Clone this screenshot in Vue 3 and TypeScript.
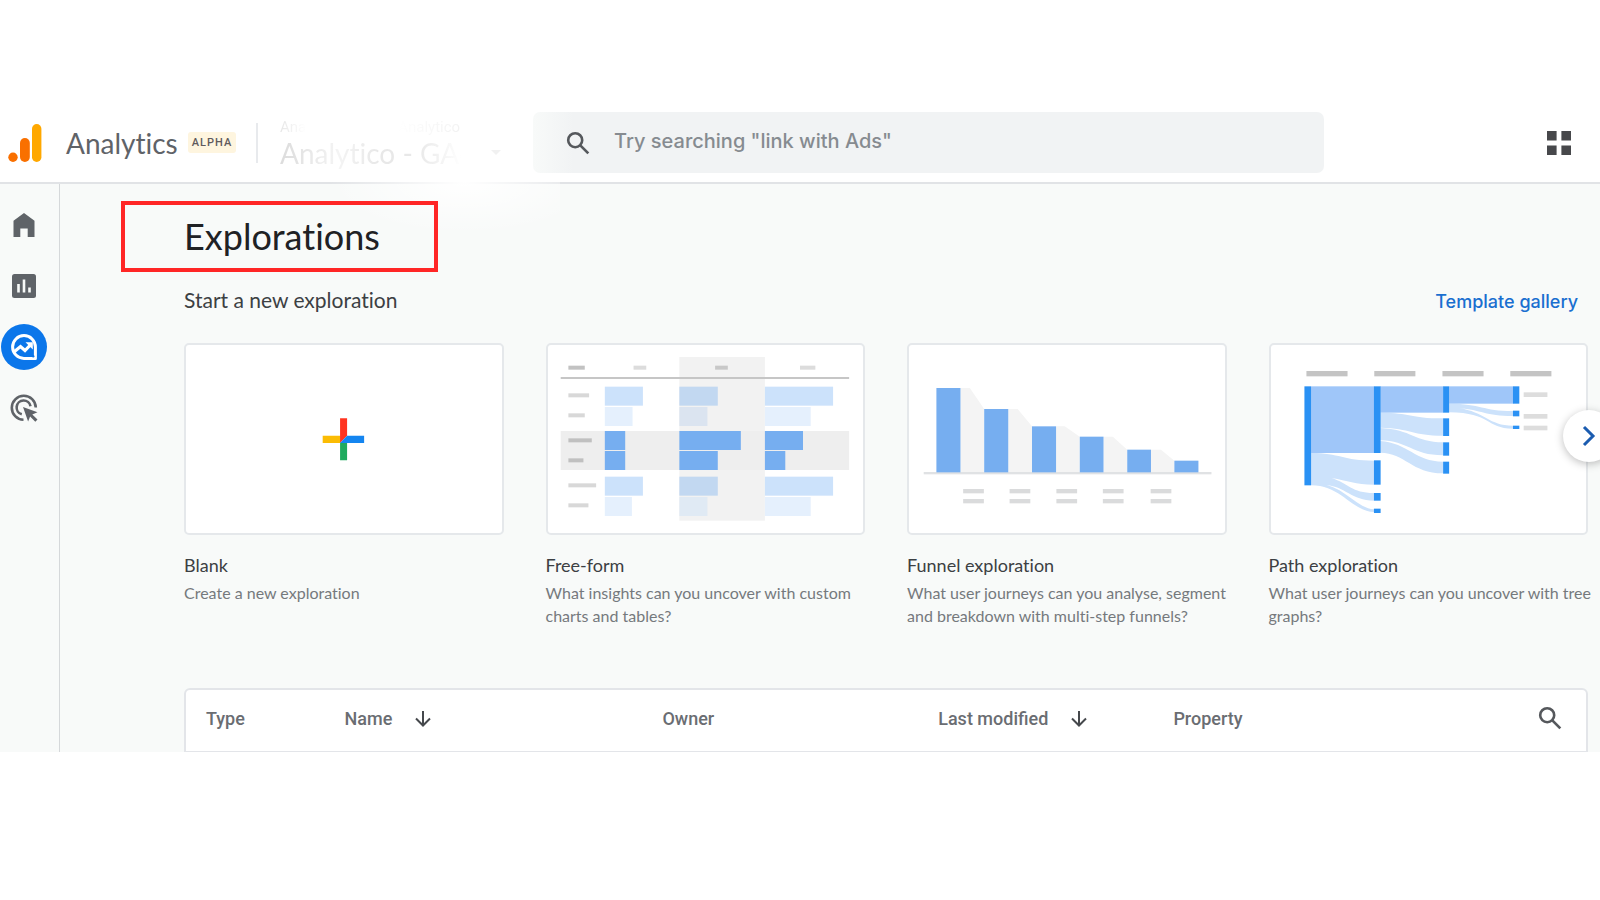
<script setup lang="ts">
interface Template {
  id: string
  title: string
  text: string
  box: string
}
interface Bar {
  x: number
  y: number
  w: number
  h: number
  c: string
}

const templates: Template[] = [
  { id: 'blank', title: 'Blank', text: 'Create a new exploration', box: '20 45 944 564' },
  { id: 'free', title: 'Free-form', text: 'What insights can you uncover with custom charts and tables?', box: '40 31 944 564' },
  { id: 'funnel', title: 'Funnel exploration', text: 'What user journeys can you analyse, segment and breakdown with multi-step funnels?', box: '44 31 944 564' },
  { id: 'path', title: 'Path exploration', text: 'What user journeys can you uncover with tree graphs?', box: '49 31 944 564' },
]

const bar = (x: number, y: number, w: number, h: number, c: string): Bar => ({ x, y, w, h, c })

const freeBars: Bar[] = [
  bar(433, 67, 256, 491, '#f2f2f2'),
  bar(78, 289, 863, 117, '#eeeeee'),
  bar(101, 93, 49, 12, '#c2c2c2'),
  bar(296, 93, 38, 12, '#dcdcdc'),
  bar(540, 93, 38, 12, '#c8c8c8'),
  bar(794, 93, 46, 12, '#dcdcdc'),
  bar(78, 127, 863, 6, '#c6c6c6'),
  bar(101, 176, 62, 12, '#d8d8d8'),
  bar(101, 236, 49, 12, '#d8d8d8'),
  bar(101, 311, 70, 12, '#c0c0c0'),
  bar(101, 371, 45, 12, '#c0c0c0'),
  bar(101, 446, 83, 12, '#d8d8d8'),
  bar(101, 506, 60, 12, '#d8d8d8'),
  bar(210, 156, 114, 57, '#cce2fb'),
  bar(210, 217, 83, 57, '#e5f0fd'),
  bar(433, 156, 115, 57, '#c2d8f1'),
  bar(433, 217, 84, 57, '#dbe4f0'),
  bar(689, 156, 204, 57, '#cce2fb'),
  bar(689, 217, 137, 57, '#e5f0fd'),
  bar(210, 289, 61, 57, '#76aef0'),
  bar(210, 349, 61, 57, '#76aef0'),
  bar(433, 289, 184, 57, '#76aef0'),
  bar(433, 349, 115, 57, '#76aef0'),
  bar(689, 289, 114, 57, '#76aef0'),
  bar(689, 349, 61, 57, '#76aef0'),
  bar(210, 426, 114, 57, '#cce2fb'),
  bar(210, 487, 81, 57, '#e5f0fd'),
  bar(433, 426, 115, 57, '#c2d8f1'),
  bar(433, 487, 84, 57, '#e0eaf4'),
  bar(689, 426, 204, 57, '#cce2fb'),
  bar(689, 487, 137, 57, '#e5f0fd'),
]

const funnelBars: Bar[] = [
  bar(88, 412, 861, 7, '#e0e2e4'),
  bar(126, 160, 72, 253, '#76aef0'),
  bar(269, 223, 72, 190, '#76aef0'),
  bar(412, 275, 72, 138, '#76aef0'),
  bar(555, 306, 71, 107, '#76aef0'),
  bar(697, 345, 71, 68, '#76aef0'),
  bar(838, 378, 72, 35, '#76aef0'),
  ...[206, 345, 485, 624, 767].flatMap((x) => [bar(x, 463, 62, 13, '#dadbdc'), bar(x, 493, 62, 13, '#dadbdc')]),
]

const pathBars: Bar[] = [
  ...[155, 358, 562, 765].map((x) => bar(x, 109, 123, 16, '#c4c4c4')),
  bar(169, 155, 189, 200, '#9fc6f9'),
  bar(376, 155, 189, 79, '#9fc6f9'),
  bar(582, 155, 192, 52, '#9fc6f9'),
  bar(149, 155, 20, 297, '#2a91f4'),
  bar(357, 155, 20, 200, '#2a91f4'),
  bar(357, 377, 20, 73, '#2a91f4'),
  bar(357, 475, 20, 23, '#2a91f4'),
  bar(357, 522, 20, 13, '#2a91f4'),
  bar(564, 155, 18, 79, '#2a91f4'),
  bar(564, 251, 18, 53, '#2a91f4'),
  bar(564, 323, 18, 40, '#2a91f4'),
  bar(564, 381, 18, 36, '#2a91f4'),
  bar(773, 155, 19, 52, '#2a91f4'),
  bar(773, 228, 19, 17, '#2a91f4'),
  bar(773, 273, 19, 10, '#2a91f4'),
  bar(805, 173, 71, 14, '#dddddd'),
  bar(805, 238, 71, 14, '#dddddd'),
  bar(805, 273, 71, 14, '#dddddd'),
]

const barsFor: Record<string, Bar[]> = { free: freeBars, funnel: funnelBars, path: pathBars, blank: [] }
</script>

<template>
  <div class="page">
    <header class="top">
      <a class="brand" href="#">
        <svg class="logo" viewBox="0 0 34 40" aria-hidden="true">
          <rect x="24" y="1" width="9.4" height="38" rx="4.7" fill="#ffa800" />
          <rect x="12" y="15" width="9.8" height="24" rx="4.9" fill="#f97000" />
          <circle cx="5" cy="34.2" r="4.7" fill="#f97000" />
        </svg>
        <span class="name">Analytics</span>
        <span class="badge">ALPHA</span>
      </a>
      <button class="account" type="button">
        <span class="crumbs"><span class="faint">Ana</span><span class="fainter">Analytico</span></span>
        <span class="property"><span class="prop-name">Analytico - GA4</span>
          <svg class="caret" viewBox="0 0 10 5" aria-hidden="true"><path d="M0 0h10L5 5z" fill="#f1f1f1" /></svg>
        </span>
      </button>
      <label class="search">
        <svg viewBox="0 0 24 24" aria-hidden="true"><circle cx="9.2" cy="9.2" r="7" /><path d="M14.3 14.3l8 8" /></svg>
        <input type="search" aria-label="Search" placeholder="Try searching &quot;link with Ads&quot;" />
      </label>
      <button class="apps" type="button" aria-label="Apps">
        <svg viewBox="0 0 24 24"><path d="M0 0h9.6v9.6H0zM14.4 0H24v9.6h-9.6zM0 14.4h9.6V24H0zM14.4 14.4H24V24h-9.6z" fill="#47484b" /></svg>
      </button>
    </header>

    <div class="body">
      <nav class="side">
        <a href="#" aria-label="Home">
          <svg viewBox="0 0 28 28"><path d="M3.500 26V9.800L14 2l10.500 7.800V26h-6.800v-8.500h-7.400V26z" fill="#5f6368" /></svg>
        </a>
        <a href="#" aria-label="Reports">
          <svg viewBox="0 0 28 28"><rect x="2" y="2" width="24" height="24" rx="2.500" fill="#5f6368" /><path d="M8.500 12v8.500M14 7.500v13M19.500 15.500v5" stroke="#f8faf9" stroke-width="2.600" /></svg>
        </a>
        <a class="active" href="#" aria-label="Explore" aria-current="page">
          <svg viewBox="0 0 28 28" fill="none" stroke="#fff">
            <path d="M14 2.600a11.400 11.400 0 1 0 0 22.800h11.400V14A11.400 11.400 0 0 0 14 2.600z" stroke-width="3" stroke-linejoin="round" />
            <path d="M4.500 18.500l6-5 4.500 4 5.800-6" stroke-width="3.200" />
            <path d="M15.500 9.200h7.300v7.300z" fill="#fff" stroke="none" />
            <circle cx="23.200" cy="23.200" r="1.200" fill="#0b76ea" stroke="none" />
          </svg>
        </a>
        <a href="#" aria-label="Advertising">
          <svg viewBox="0 0 28 28" fill="none" stroke="#5f6368" stroke-width="2.600">
            <path d="M25.800 13.500A12 12 0 1 0 13.500 25.800" />
            <path d="M20.500 12.200A7 7 0 1 0 11.800 20.300" />
            <path d="M13 13l14.500 5.200-5.200 2.200 5.200 5.200-2.200 2.200-5.200-5.200-2 5z" fill="#5f6368" stroke="none" />
          </svg>
        </a>
      </nav>

      <main>
        <div class="haze" aria-hidden="true"></div>
        <h1>Explorations</h1>
        <div class="subhead">
          <h2>Start a new exploration</h2>
          <a href="#">Template gallery</a>
        </div>

        <section class="cards">
          <a v-for="t in templates" :key="t.id" class="card" href="#">
            <span class="frame">
              <svg :viewBox="t.box" preserveAspectRatio="none" aria-hidden="true">
                <g v-if="t.id === 'blank'">
                  <path d="M429 317h53v22h-53z" fill="#fbbc04" />
                  <path d="M481 338h21v53h-21z" fill="#1faa5e" />
                  <path d="M481 265h21v52l-21 22z" fill="#ff3420" />
                  <path d="M502 317h51v22h-72z" fill="#1485f0" />
                </g>
                <path v-if="t.id === 'funnel'" fill="#f4f4f4" d="M198 160h28l43 63v190h-71zM341 223h28l43 52v138h-71zM484 275h26l45 31v107h-71zM626 306h28l43 39v68h-71zM768 345h30l40 33v35h-70z" />
                <g v-if="t.id === 'path'" fill="#cce2fb">
                  <path d="M169 355C255 355 265 378 357 378V450C300 450 280 438 230 430C280 446 290 475 357 475V498C290 498 270 455 215 452C270 462 310 522 357 524V532C290 530 260 452 169 452z" />
                  <path d="M376 234C470 234 460 251 564 251V303C470 303 470 281 376 279z" />
                  <path d="M376 280C470 284 480 323 564 323V362C470 362 460 318 376 317z" />
                  <path d="M376 319C460 325 480 381 564 381V416C470 416 450 354 376 354z" />
                  <path d="M582 207C680 207 680 229 773 229V244C690 244 680 226 610 220C690 232 700 273 773 273V282C690 282 710 234 582 233z" />
                </g>
                <rect v-for="(b, i) in barsFor[t.id]" :key="i" :x="b.x" :y="b.y" :width="b.w" :height="b.h" :fill="b.c" />
              </svg>
            </span>
            <span class="title">{{ t.title }}</span>
            <span class="desc">{{ t.text }}</span>
          </a>
          <button class="next" type="button" aria-label="Next templates">
            <svg viewBox="0 0 14 22"><path d="M2 2l9 9-9 9" fill="none" stroke="#1b5cb0" stroke-width="3" /></svg>
          </button>
        </section>

        <table>
          <thead>
            <tr>
              <th class="c-type" scope="col">Type</th>
              <th class="c-name" scope="col"><button type="button">Name
                <svg viewBox="0 0 16 16"><path d="M8 0v14M1 7.500l7 7 7-7" /></svg></button></th>
              <th class="c-owner" scope="col">Owner</th>
              <th class="c-mod" scope="col"><button type="button">Last modified
                <svg viewBox="0 0 16 16"><path d="M8 0v14M1 7.500l7 7 7-7" /></svg></button></th>
              <th scope="col">Property</th>
              <td class="c-find">
                <button type="button" aria-label="Search explorations">
                  <svg class="find" viewBox="0 0 24 24"><circle cx="9.200" cy="9.200" r="7" /><path d="M14.300 14.300l8 8" /></svg>
                </button>
              </td>
            </tr>
          </thead>
        </table>
      </main>
    </div>
  </div>
</template>

<style>
body {
  margin: 0;
  background: #fff;
}
</style>

<style scoped>
* {
  box-sizing: border-box;
}
.page {
  padding-top: 100px;
  overflow: hidden;
  font-family: Lato, "Liberation Sans", sans-serif;
  font-variant-ligatures: none;
  color: #3c4043;
}
a {
  color: inherit;
  text-decoration: none;
}
button {
  padding: 0;
  border: 0;
  background: none;
  font: inherit;
  color: inherit;
  cursor: pointer;
}
svg {
  display: block;
}
.top {
  display: flex;
  align-items: center;
  height: 84px;
  padding: 3px 29px 0 8px;
  border-bottom: 2px solid #e1e3e6;
}
.brand {
  display: flex;
  align-items: center;
  flex: none;
  width: 250px;
  height: 40px;
  border-right: 2px solid #e8eaed;
}
.logo {
  width: 34px;
  height: 40px;
}
.name {
  margin-left: 24px;
  font-size: 28px;
  line-height: 40px;
  color: #5f6368;
}
.badge {
  margin-left: 10px;
  padding: 0 4px;
  border-radius: 3px;
  background: #fef5df;
  font: 500 11px/21px Roboto, sans-serif;
  letter-spacing: 1px;
  color: #5f5a5c;
}
.account {
  flex: none;
  width: 254px;
  margin-right: 21px;
  padding-left: 22px;
  text-align: left;
}
.crumbs {
  display: flex;
  gap: 92px;
  font: 15px/20px Roboto, sans-serif;
}
.faint {
  color: transparent;
  background: linear-gradient(90deg, #e6e6e6, #fff);
  background-clip: text;
}
.fainter {
  color: transparent;
  background: linear-gradient(90deg, #fff, #f2f2f2);
  background-clip: text;
}
.property {
  display: flex;
  align-items: center;
  gap: 16px;
  font-size: 28px;
  line-height: 32px;
}
.prop-name {
  color: transparent;
  background: linear-gradient(90deg, #dcdcdc, #ececec 20%, #f4f4f4 30%, #e8e8e8 50%, #e8e8e8 70%, #f6f6f6 85%, #fff 93%);
  background-clip: text;
}
.caret {
  width: 10px;
  height: 5px;
}
.search {
  display: flex;
  align-items: center;
  flex: 0 1 791px;
  height: 61px;
  padding-left: 33px;
  border-radius: 7px;
  background: linear-gradient(90deg, #f8faf9, #f1f3f4 40px);
}
.search svg {
  flex: none;
  width: 24px;
  height: 24px;
}
.search svg,
.find {
  fill: none;
  stroke: #55585c;
  stroke-width: 2.6;
}
.search input {
  flex: 1;
  min-width: 0;
  height: 28px;
  margin: 0 0 3px 24px;
  padding: 0;
  border: 0;
  outline: 0;
  background: none;
  font: 500 20px/28px Inter, sans-serif;
}
.search input::placeholder {
  color: #868b90;
  opacity: 1;
}
.apps {
  margin-left: auto;
}
.apps svg {
  width: 24px;
  height: 24px;
}
.body {
  display: flex;
  background: #f8faf9;
}
.side {
  display: flex;
  flex: none;
  flex-direction: column;
  gap: 15px;
  width: 60px;
  padding: 18px 1px;
  border-right: 1px solid #d5d8da;
}
.side a {
  display: grid;
  place-items: center;
  width: 46px;
  height: 46px;
  border-radius: 50%;
}
.side .active {
  background: #0b76ea;
}
.side svg {
  width: 28px;
  height: 28px;
}
main {
  position: relative;
  flex: 1;
  min-width: 0;
  padding: 17px 12px 0 124px;
}
.haze {
  position: absolute;
  top: -2px;
  left: 200px;
  width: 300px;
  height: 52px;
  background: radial-gradient(ellipse 45% 100% at 68% 0, #fff, #ffffff00);
}
h1 {
  position: relative;
  width: 317px;
  margin: 0 0 0 -63px;
  padding-left: 59px;
  border: 4px solid #ff2626;
  font-size: 36px;
  font-weight: 400;
  line-height: 63px;
  color: #202124;
}
.subhead {
  display: flex;
  align-items: baseline;
  justify-content: space-between;
  height: 28px;
  margin: 14px 0 29px;
  padding-right: 10px;
}
h2 {
  margin: 0;
  font-size: 21px;
  font-weight: 400;
  line-height: 28px;
}
.subhead a {
  font: 500 18px/28px Inter, sans-serif;
  color: #1a6fd0;
}
.cards {
  position: relative;
  display: grid;
  grid-template-columns: repeat(4, minmax(0, 1fr));
  gap: 42px;
}
.card {
  display: flex;
  flex-direction: column;
}
.frame {
  overflow: hidden;
  height: 192px;
  border: 2px solid #e5e8eb;
  border-radius: 5px;
  background: #fff;
}
.frame svg {
  width: 100%;
  height: 100%;
}
.title {
  margin-top: 18px;
  font-size: 18px;
  line-height: 24px;
}
.desc {
  margin-top: 4px;
  margin-right: -8px;
  font-size: 16px;
  line-height: 23px;
  color: #75797d;
}
.next {
  position: absolute;
  top: 67px;
  right: -27px;
  display: grid;
  place-items: center;
  width: 52px;
  height: 52px;
  border-radius: 50%;
  background: #fff;
  box-shadow: 0 2px 8px #00000040;
}
.next svg {
  width: 14px;
  height: 22px;
}
table {
  width: 100%;
  height: 64px;
  margin-top: 61px;
  table-layout: fixed;
  border: 2px solid #e3e5e9;
  border-bottom-width: 1px;
  border-radius: 6px 6px 0 0;
  border-spacing: 0;
  background: #fff;
  font: 500 18px/24px Roboto, sans-serif;
  color: #6a6d72;
}
th {
  padding: 0 0 3px 20px;
  font-weight: 500;
  text-align: left;
}
td {
  padding: 0;
}
th button {
  display: flex;
  align-items: center;
  gap: 23px;
}
th svg {
  width: 16px;
  height: 16px;
  fill: none;
  stroke: #45484c;
  stroke-width: 2;
}
.c-type {
  width: 9.9%;
}
.c-name {
  width: 22.7%;
}
.c-owner {
  width: 19.7%;
}
.c-mod {
  width: 16.8%;
}
.c-find {
  width: 48px;
}
.find {
  width: 24px;
  height: 24px;
}
</style>
